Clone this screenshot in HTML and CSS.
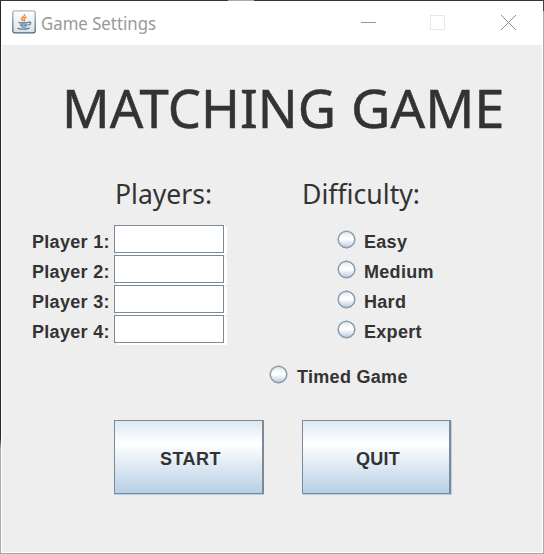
FILE: index.html
```html
<!DOCTYPE html>
<html lang="en">
<head>
<meta charset="utf-8">
<title>Game Settings</title>
<link rel="stylesheet" href="styles.css">
</head>
<body>
<div class="window">
  <header class="titlebar">
    <svg class="java" width="24" height="24" viewBox="0 0 24 24">
      <defs><linearGradient id="ib" x2="0" y2="1"><stop offset="0" stop-color="#fff"/><stop offset="1" stop-color="#dde0e3"/></linearGradient>
      <linearGradient id="is" x2="0" y2="1"><stop offset="0" stop-color="#a9b8c4"/><stop offset="1" stop-color="#456579"/></linearGradient></defs>
      <rect x=".8" y=".8" width="22.4" height="22" rx="2" fill="url(#ib)" stroke="url(#is)" stroke-width="1.3"/>
      <path d="M12.700 4.200c1 2-3.700 3.100-3.200 5 .2 1 1.400 1.300 1.600 2M14.500 7c-2.500 1-3 2-2 3 .4.500.1.900-.4 1.300" fill="none" stroke="#ef8a3c" stroke-width="1.500"/>
      <path d="M6.500 12.300c1 1 8.500.9 9.800-.1M8 14.600c1.500.8 6 .7 7.500 0M9 16.500c1.500.7 4 .6 5.500 0M16 12.300c3.500-1 3.500 2 .3 2.900M5.500 18.200c2 1.400 10.500 1.200 12-.4" fill="none" stroke="#547f9f" stroke-width="1.300"/>
    </svg>
    <svg class="caption" width="116" height="24"><text x="0" y="17" textLength="115" lengthAdjust="spacingAndGlyphs">Game Settings</text></svg>
    <svg class="controls" width="156" height="16" viewBox="0 0 156 16" fill="none">
      <path d="M0 7.500h15" stroke="#999"/>
      <rect x="69.500" y=".5" width="14" height="14" stroke="#e8e8e8"/>
      <path d="M140 0l15 15M155 0l-15 15" stroke="#8c8c8c"/>
    </svg>
  </header>
  <main class="content">
    <h1><svg width="444" height="60"><text x="-2" y="43" textLength="274" lengthAdjust="spacingAndGlyphs">MATCHING</text> <text x="287" y="43" textLength="153.500" lengthAdjust="spacingAndGlyphs">GAME</text></svg></h1>
    <div class="columns">
      <section class="players">
        <h2><svg width="98" height="40"><text x="0" y="26.500" textLength="97" lengthAdjust="spacingAndGlyphs">Players:</text></svg></h2>
        <label class="player"><span>Player 1:</span><input type="text"></label>
        <label class="player"><span>Player 2:</span><input type="text"></label>
        <label class="player"><span>Player 3:</span><input type="text"></label>
        <label class="player"><span>Player 4:</span><input type="text"></label>
      </section>
      <section class="difficulty">
        <h2><svg width="120" height="40"><text x="0" y="26.500" textLength="118" lengthAdjust="spacingAndGlyphs">Difficulty:</text></svg></h2>
        <label class="option"><i class="radio"></i><span>Easy</span></label>
        <label class="option medium"><i class="radio"></i><span>Medium</span></label>
        <label class="option"><i class="radio"></i><span>Hard</span></label>
        <label class="option"><i class="radio"></i><span>Expert</span></label>
      </section>
    </div>
    <label class="option timed"><i class="radio"></i><span>Timed Game</span></label>
    <div class="actions">
      <button class="start" type="button"><span>START</span></button>
      <button class="quit" type="button"><span>QUIT</span></button>
    </div>
  </main>
</div>
</body>
</html>
```
FILE: styles.css
```css
* { box-sizing: border-box; }
body { margin: 0; overflow: hidden; color: #333; font: bold 18px/30px "Liberation Sans", sans-serif; }
svg { display: block; overflow: visible; }
.window {
  width: 544px; height: 554px; padding: 1px;
  background: linear-gradient(#aaa, #aaa) 228px 0 / 26px 1px no-repeat,
    linear-gradient(#373438 0 1px, transparent 1px),
    linear-gradient(#444, #444) 100% 0 / 1px 11px no-repeat,
    linear-gradient(#a5a5a5, #a5a5a5) 0 100% / 100% 1px no-repeat,
    linear-gradient(90deg, transparent 543px, #aaa 543px),
    linear-gradient(#272427 438px, #aaa 448px);
}
.titlebar { height: 44px; background: #fff; display: flex; padding: 9px 0 0 11px; }
.caption { margin: 3px 0 0 5px; font: 17.5px "Noto Sans", sans-serif; fill: #999; }
.controls { margin: 5px 0 0 204px; }
.content { height: 508px; background: #eee; border: solid #fff; border-width: 0 1px 1px; padding-top: 40px; }
h1, h2 { margin: 0; font-weight: 400; font-family: "Noto Sans", sans-serif; fill: #333; }
h1 { height: 92px; padding-left: 62px; font-size: 53px; stroke: #333; stroke-width: .5px; }
h2 { height: 48px; font-size: 27px; }
.columns { display: flex; padding-left: 30px; }
.players { width: 270px; }
.players h2 { padding-left: 83px; }
.player { display: flex; height: 30px; }
.player span { width: 82px; padding-top: 2px; white-space: nowrap; letter-spacing: .3px; }
.player input {
  width: 110px; height: 28px; padding: 0 4px; border: 1px solid #7a8a99; border-radius: 0;
  background: #fff; box-shadow: 1px 0 #fff, 3px 2px #fff; outline: 0;
}
.option { display: flex; height: 30px; letter-spacing: .3px; }
.difficulty .option { padding-left: 36px; }
.option span { padding: 2px 0 0 9px; white-space: nowrap; }
.radio {
  width: 17px; height: 17px; margin-top: 6px; border: 1px solid #7a8a99; border-radius: 50%;
  background: linear-gradient(#dce8f3, #fff 40%, #fff 50%, #b8cfe5);
  box-shadow: 0 0 0 .5px #7a8a99;
}
.timed { margin: 15px 0 0 268px; }
.timed span { padding-left: 10px; }
.actions { display: flex; gap: 38px; margin: 30px 0 0 112px; }
button {
  width: 150px; height: 74px; padding: 4px 0 0; border: 1px solid #7a8a99; border-right-width: 2px;
  font: inherit; color: inherit; background: linear-gradient(#dce8f3, #fff 31%, #b8cfe5);
  box-shadow: 0 1px #b8cfe5;
}
.start span { letter-spacing: .5px; margin-left: 4px; }
.quit { width: 149px; box-shadow: 1px 1px #b8cfe5; }
.quit span { margin-left: 4px; letter-spacing: .2px; }
```
